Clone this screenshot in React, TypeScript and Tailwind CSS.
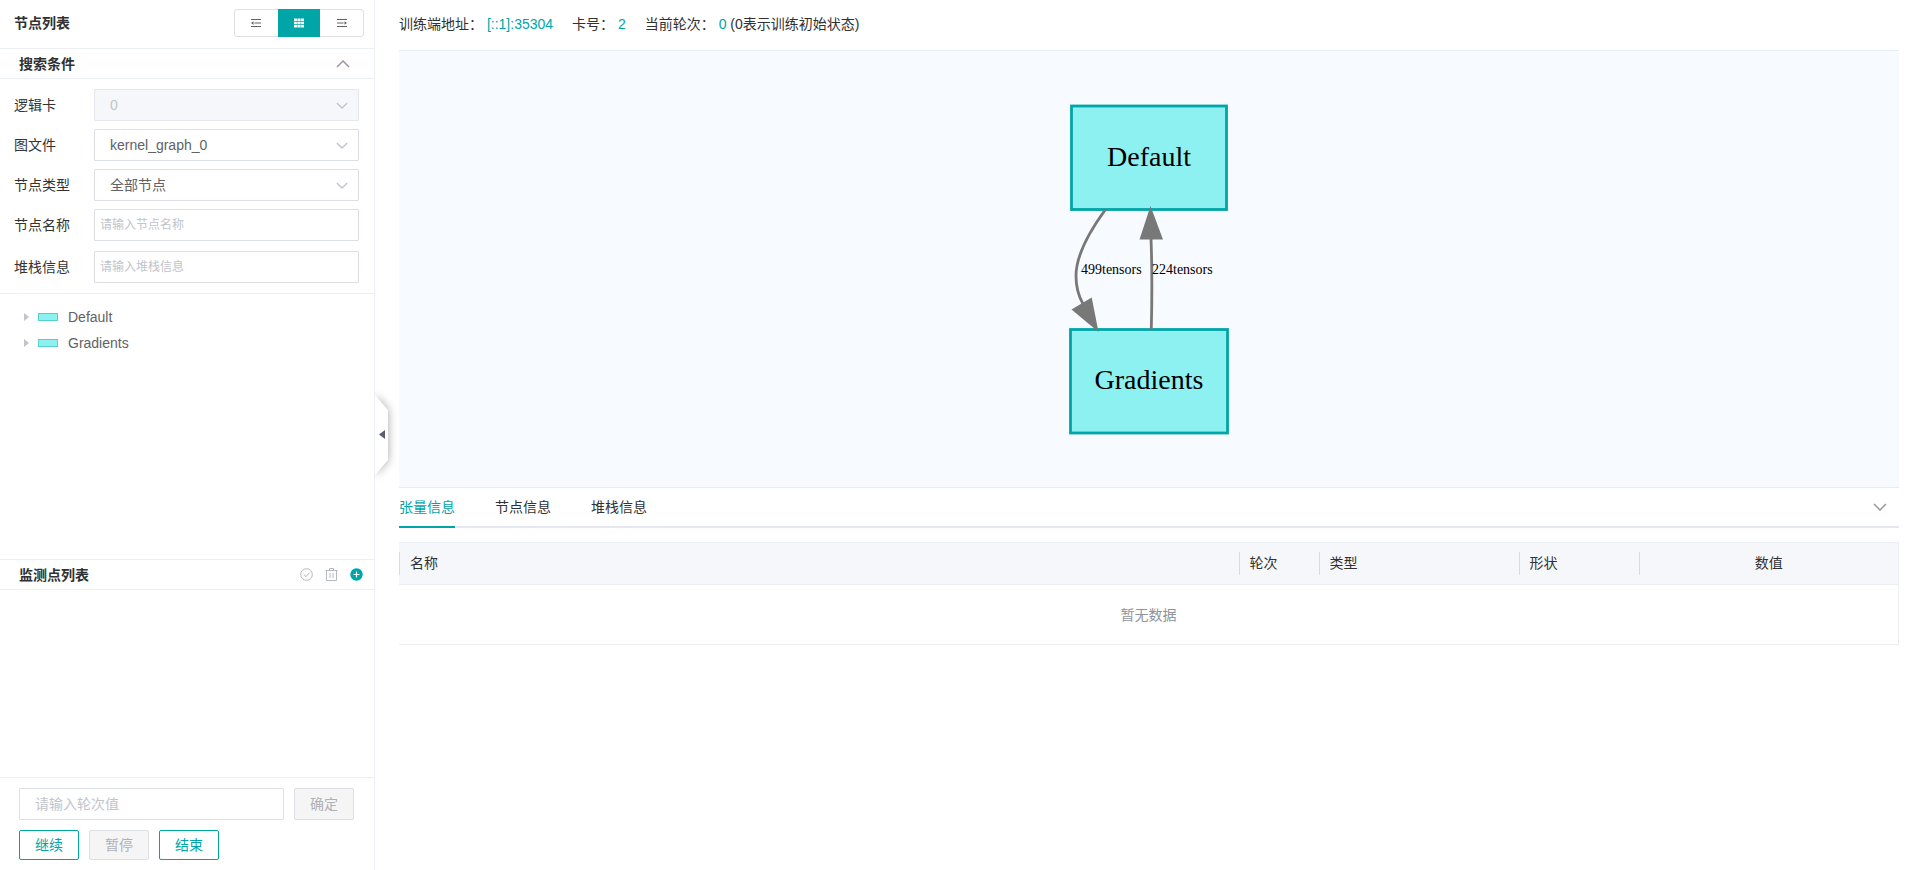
import { useState } from 'react';
import type { ReactNode } from 'react';
import clsx from 'clsx';

const tabs = ['张量信息', '节点信息', '堆栈信息'];
const treeNodes = ['Default', 'Gradients'];

function Chevron({ className, up = false }: { className?: string; up?: boolean }) {
  return (
    <svg viewBox="0 0 14 8" fill="none" stroke="currentColor" className={className} aria-hidden="true">
      <path d={up ? 'M1 7 L7 1 L13 7' : 'M1 1 L7 7 L13 1'} />
    </svg>
  );
}

function FormRow({ id, label, className, children }: { id: string; label: string; className?: string; children: ReactNode }) {
  return (
    <div className={clsx('flex items-center', className)}>
      <label htmlFor={id} className="w-20 shrink-0 text-[#333]">
        {label}
      </label>
      {children}
    </div>
  );
}

function SelectBox({ id, options, disabled = false }: { id: string; options: string[]; disabled?: boolean }) {
  return (
    <div className="relative flex-1">
      <select
        id={id}
        disabled={disabled}
        className="block h-8 w-full appearance-none rounded-[1px] border border-[#dcdfe6] bg-white px-[15px] text-[#606266] outline-none disabled:border-[#e4e7ed] disabled:bg-[#f5f7fa] disabled:text-[#c0c4cc] disabled:opacity-100"
      >
        {options.map((option) => (
          <option key={option}>{option}</option>
        ))}
      </select>
      <Chevron className="pointer-events-none absolute top-[13px] right-[11px] h-[7px] w-3 stroke-[1.5] text-[#c0c4cc]" />
    </div>
  );
}

function ViewSwitch() {
  const [active, setActive] = useState(1);
  const icons = [
    <>
      <path d="M0 1.500h10M3.500 5h6.500M0 8.500h10" stroke="currentColor" />
      <path d="M0 5 L2.500 3.300v3.400z" fill="currentColor" />
    </>,
    <>
      <path d="M0 .500h10v2.600H0z M0 3.800h10v2.500H0z M0 7h10v2.600H0z" fill="currentColor" />
      <path d="M3.300 0v10M6.700 0v10" stroke="#00a5a7" strokeWidth=".5" />
    </>,
    <>
      <path d="M0 1.500h10M0 5h6.500M0 8.500h10" stroke="currentColor" />
      <path d="M10 5 L7.500 3.300v3.400z" fill="currentColor" />
    </>,
  ];
  const names = ['收起', '默认', '展开'];

  return (
    <div className="flex h-7 w-[130px] rounded-[3px] border border-[#dcdfe6]">
      {icons.map((icon, i) => (
        <button
          key={names[i]}
          type="button"
          aria-label={names[i]}
          aria-pressed={i === active}
          onClick={() => setActive(i)}
          className={clsx(
            '-my-px flex flex-1 items-center justify-center',
            i === active ? 'bg-[#00a5a7] text-white' : 'text-[#606266]'
          )}
        >
          <svg viewBox="0 0 10 10" fill="none" className="size-[10px]" aria-hidden="true">
            {icon}
          </svg>
        </button>
      ))}
    </div>
  );
}

function SearchForm() {
  const inputClass =
    'h-8 min-w-0 flex-1 rounded-[1px] border border-[#dcdfe6] px-[5px] text-xs text-[#606266] outline-none placeholder:text-[#c0c4cc]';

  return (
    <form className="flex flex-col gap-2 border-b border-[#ebeef5] py-[10px] pr-[15px] pl-[14px]">
      <FormRow id="card" label="逻辑卡">
        <SelectBox id="card" options={['0']} disabled />
      </FormRow>
      <FormRow id="graph" label="图文件">
        <SelectBox id="graph" options={['kernel_graph_0']} />
      </FormRow>
      <FormRow id="type" label="节点类型">
        <SelectBox id="type" options={['全部节点']} />
      </FormRow>
      <FormRow id="name" label="节点名称">
        <input id="name" type="text" placeholder="请输入节点名称" className={inputClass} />
      </FormRow>
      <FormRow id="stack" label="堆栈信息" className="mt-0.5">
        <input id="stack" type="text" placeholder="请输入堆栈信息" className={inputClass} />
      </FormRow>
    </form>
  );
}

function Sidebar() {
  return (
    <aside className="relative flex w-[375px] shrink-0 flex-col border-r border-[#ebeef5]">
      <div className="flex h-[49px] items-center justify-between border-b border-[#ebeef5] pr-[10px] pl-[14px] pb-0.5">
        <h1 className="font-bold">节点列表</h1>
        <ViewSwitch />
      </div>

      <div className="flex h-[30px] items-center justify-between border-b border-[#ebeef5] pr-6 pl-[19px]">
        <h2 className="font-bold">搜索条件</h2>
        <button type="button" aria-label="收起搜索条件">
          <Chevron up className="h-2 w-[14px] stroke-[1.5] text-[#999]" />
        </button>
      </div>
      <SearchForm />

      <ul className="flex-1 py-[10px] pl-6 text-[#606266]">
        {treeNodes.map((node) => (
          <li key={node} className="flex h-[26px] items-center">
            <svg viewBox="0 0 5 8" className="h-2 w-[5px] fill-[#c0c4cc]" aria-hidden="true">
              <path d="M0 0 L5 4 L0 8z" />
            </svg>
            <span className="mr-[10px] ml-[9px] h-2 w-5 border border-[#55cfd0] bg-[#8df1f2]" />
            {node}
          </li>
        ))}
      </ul>

      {/* Watch points */}
      <div className="flex h-[31px] items-center justify-between border-y border-[#ebeef5] pr-[11px] pl-[19px]">
        <h2 className="font-bold">监测点列表</h2>
        <div className="flex gap-3 text-[#b4b8bf]">
          <button type="button" aria-label="校验">
            <svg viewBox="0 0 13 13" fill="none" stroke="currentColor" className="size-[13px]" aria-hidden="true">
              <circle cx="6.5" cy="6.5" r="5.8" />
              <path d="M3.8 6.5 L6 8.6 L9.6 4.6" />
            </svg>
          </button>
          <button type="button" aria-label="删除">
            <svg viewBox="0 0 13 13" fill="none" stroke="currentColor" className="size-[13px]" aria-hidden="true">
              <path d="M.5 2.5h12M4.5 2.5v-2h4v2M1.500 2.500v10h10v-10M5 5v5M8 5v5" />
            </svg>
          </button>
          <button type="button" aria-label="新增">
            <svg viewBox="0 0 13 13" className="size-[13px]" aria-hidden="true">
              <circle cx="6.5" cy="6.5" r="6.2" fill="#00a5a7" />
              <path d="M3.5 6.5h6M6.5 3.5v6" stroke="#fff" strokeWidth="1.2" />
            </svg>
          </button>
        </div>
      </div>
      <div className="h-[187px]" />

      <div className="flex flex-col gap-[10px] border-t border-[#ebeef5] px-[19px] py-[10px]">
        <div className="flex gap-[10px]">
          <input
            type="text"
            aria-label="轮次值"
            placeholder="请输入轮次值"
            className="h-8 w-[265px] rounded-[1px] border border-[#dcdfe6] px-[15px] outline-none placeholder:text-[#c0c4cc]"
          />
          <button type="button" disabled className="h-8 w-[60px] rounded-xs border border-[#dcdfe6] bg-[#f5f5f6] text-[#adb0b8]">
            确定
          </button>
        </div>
        <div className="flex gap-[10px]">
          <button type="button" className="h-[30px] w-[60px] rounded-xs border border-[#00a5a7] text-[#00a5a7]">
            继续
          </button>
          <button type="button" disabled className="h-[30px] w-[60px] rounded-xs border border-[#dcdfe6] bg-[#f5f5f6] text-[#adb0b8]">
            暂停
          </button>
          <button type="button" className="h-[30px] w-[60px] rounded-xs border border-[#00a5a7] text-[#00a5a7]">
            结束
          </button>
        </div>
      </div>

      {/* Collapse handle */}
      <button type="button" aria-label="收起侧栏" className="absolute top-1/2 left-full ml-px -translate-y-1/2">
        <svg viewBox="0 0 13 80" className="h-20 w-[13px] overflow-visible [clip-path:inset(-12px_-12px_-12px_0)]" aria-hidden="true">
          <path d="M0 0 L13 15 V65 L0 80z" fill="#fff" className="drop-shadow-[0_0_5px_rgba(0,0,0,0.35)]" />
          <path d="M4 39.500 L10 35 V44z" fill="#5a5e6b" />
        </svg>
      </button>
    </aside>
  );
}

function Graph() {
  return (
    <div className="flex h-[438px] justify-center border-y border-[#e6ebf5] bg-[#f7faff]">
      <svg viewBox="0 0 200 436" className="h-full w-[200px]" role="img" aria-label="计算图">
        <g fill="#8df1f2" stroke="#00a5a7" strokeWidth="2.8">
          <rect x="22.500" y="55" width="155" height="103.500" />
          <rect x="21.500" y="278.500" width="157" height="103.500" />
        </g>
        <g fill="none" stroke="#787878" strokeWidth="2.8">
          <path d="M56.500 158.500 C40 181 27 205 27 225 C27 235 29 244 34 253" />
          <path d="M102.300 278 C103 250 103.300 220 102 188" />
        </g>
        <g fill="#787878">
          <path d="M49.500 281 L22.500 258.500 L42.700 246.500z" />
          <path d="M101.500 155 L90.500 188.500 L114 188.500z" />
        </g>
        <g textAnchor="middle" className="font-['Liberation_Serif',serif] text-[28px]">
          <text x="100" y="115">Default</text>
          <text x="100" y="338">Gradients</text>
        </g>
        <g className="font-['Liberation_Serif',serif] text-[14px]">
          <text x="32" y="223">499tensors</text>
          <text x="103" y="223">224tensors</text>
        </g>
      </svg>
    </div>
  );
}

function TensorTable() {
  return (
    <table className="w-full table-fixed border-collapse border-y border-r border-[#ebeef5]">
      <thead>
        <tr className="h-[42px] border-b border-[#ebeef5] bg-[#f5f7fa] text-left">
          {[
            ['名称', ''],
            ['轮次', 'w-20'],
            ['类型', 'w-[200px]'],
            ['形状', 'w-[120px]'],
            ['数值', 'w-[260px] text-center'],
          ].map(([name, className]) => (
            <th key={name} className={clsx('p-0 font-normal', className)}>
              <div className="border-l border-[#d8dbe2] px-[10px] leading-[23px]">{name}</div>
            </th>
          ))}
        </tr>
      </thead>
      <tbody>
        <tr className="h-[60px]">
          <td colSpan={5} className="p-0 text-center text-[#909399]">
            暂无数据
          </td>
        </tr>
      </tbody>
    </table>
  );
}

export default function App() {
  const [tab, setTab] = useState(0);

  return (
    <div className="flex min-h-screen bg-white font-['Liberation_Sans','Noto_Sans_CJK_SC',sans-serif] text-sm text-[#303133]">
      <Sidebar />
      <main className="min-w-0 flex-1 pr-[15px] pl-6">
        <div className="flex h-[50px] items-center gap-[19px] pb-0.5">
          <p>
            训练端地址： <span className="text-[#00a5a7]">[::1]:35304</span>
          </p>
          <p>
            卡号： <span className="text-[#00a5a7]">2</span>
          </p>
          <p>
            当前轮次： <span className="text-[#00a5a7]">0</span> (0表示训练初始状态)
          </p>
        </div>

        <Graph />

        <div className="mb-[14px] flex h-10 justify-between border-b-2 border-[#e4e7ed]">
          <div role="tablist" className="flex gap-10">
            {tabs.map((name, i) => (
              <button
                key={name}
                type="button"
                role="tab"
                aria-selected={i === tab}
                onClick={() => setTab(i)}
                className={clsx(
                  '-mb-0.5 border-b-2',
                  i === tab ? 'border-[#00a5a7] text-[#00a5a7]' : 'border-transparent'
                )}
              >
                {name}
              </button>
            ))}
          </div>
          <button type="button" aria-label="收起面板" className="px-3">
            <Chevron className="h-2 w-[14px] stroke-[1.5] text-[#999]" />
          </button>
        </div>

        <TensorTable />
      </main>
    </div>
  );
}
